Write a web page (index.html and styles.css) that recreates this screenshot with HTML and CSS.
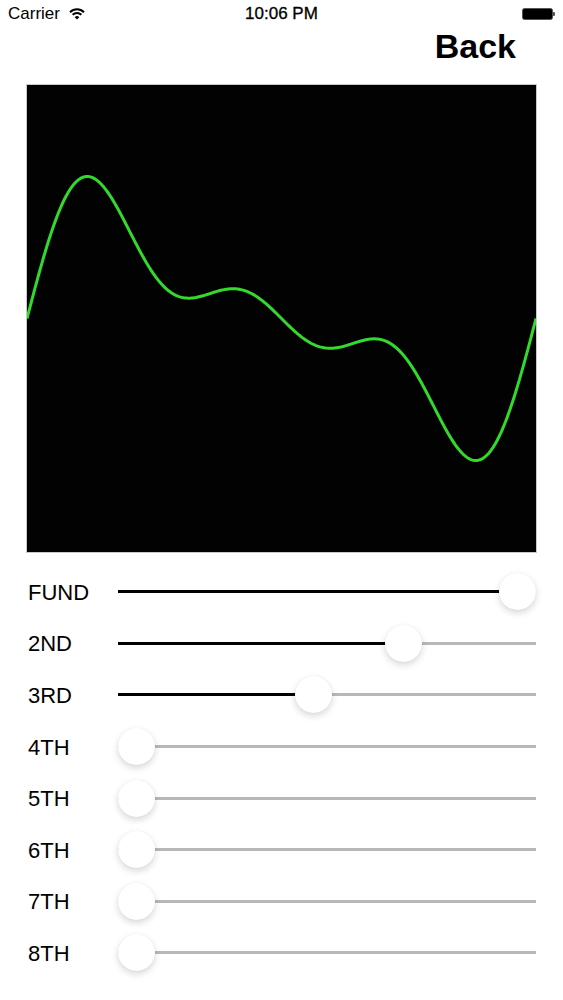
FILE: index.html
```html
<!DOCTYPE html>
<html lang="en">

<head>
    <meta charset="UTF-8">
    <meta name="viewport" content="width=device-width, initial-scale=1.0">
    <title>Harmonics</title>
    <link rel="stylesheet" href="styles.css">
</head>

<body>

    <div class="status-bar">
        <div class="carrier">
            Carrier
            <svg class="wifi" width="16" height="12" viewBox="0 0 16 12">
                <path d="M1 4.2 A10 10 0 0 1 15 4.2" />
                <path d="M3.6 6.8 A6.3 6.3 0 0 1 12.4 6.8" />
                <path d="M8 11.5 L5.7 9.2 A3.2 3.2 0 0 1 10.3 9.2 Z" class="wifi-dot" />
            </svg>
        </div>
        <div class="time">10:06 PM</div>
        <div class="battery"><span class="battery-body"></span><span class="battery-nub"></span></div>
    </div>

    <div class="nav">
        <span class="back">Back</span>
    </div>

    <div class="scope">
        <svg id="wave" width="509" height="467" viewBox="0 0 509 467">
            <polyline id="line" points="" />
        </svg>
    </div>

    <div class="sliders">
        <div class="row">
            <span class="label">FUND</span>
            <div class="slider" style="--v: 1"><span class="fill"></span><span class="thumb"></span></div>
        </div>
        <div class="row">
            <span class="label">2ND</span>
            <div class="slider" style="--v: 0.7"><span class="fill"></span><span class="thumb"></span></div>
        </div>
        <div class="row">
            <span class="label">3RD</span>
            <div class="slider" style="--v: 0.465"><span class="fill"></span><span class="thumb"></span></div>
        </div>
        <div class="row">
            <span class="label">4TH</span>
            <div class="slider" style="--v: 0"><span class="fill"></span><span class="thumb"></span></div>
        </div>
        <div class="row">
            <span class="label">5TH</span>
            <div class="slider" style="--v: 0"><span class="fill"></span><span class="thumb"></span></div>
        </div>
        <div class="row">
            <span class="label">6TH</span>
            <div class="slider" style="--v: 0"><span class="fill"></span><span class="thumb"></span></div>
        </div>
        <div class="row">
            <span class="label">7TH</span>
            <div class="slider" style="--v: 0"><span class="fill"></span><span class="thumb"></span></div>
        </div>
        <div class="row">
            <span class="label">8TH</span>
            <div class="slider" style="--v: 0"><span class="fill"></span><span class="thumb"></span></div>
        </div>
    </div>

    <script>
        const sliders = document.querySelectorAll('.slider')
        const line = document.getElementById('line')
        const w = 509
        const h = 467
        const peak = 142

        // amplitudes come straight from the slider values
        const amps = [...sliders].map(s => parseFloat(s.style.getPropertyValue('--v')))

        const samples = []
        let max = 0
        for (let i = 0; i <= w; i++) {
            const t = i / w * Math.PI * 2
            let y = 0
            amps.forEach((a, n) => { y += a * Math.sin(t * (n + 1)) })
            samples.push(y)
            if (Math.abs(y) > max) max = Math.abs(y)
        }

        line.setAttribute('points', samples.map((y, i) => `${i},${(h / 2 - y / max * peak).toFixed(2)}`).join(' '))
    </script>
</body>

</html>
```

FILE: styles.css
```css
body {
    margin: 0;
    background: white;
    font-family: 'Liberation Sans', Arial, sans-serif;
    color: black;
}

.status-bar {
    height: 28px;
    display: flex;
    align-items: center;
    justify-content: space-between;
    padding: 0 8px 0 8px;
    font-size: 17px;
}

.carrier {
    display: flex;
    align-items: center;
    gap: 9px;
    width: 120px;
}

.wifi {
    fill: none;
    stroke: black;
    stroke-width: 2;
}

.wifi .wifi-dot {
    fill: black;
    stroke: none;
}

.time {
    font-size: 17px;
    -webkit-text-stroke: 0.3px black;
}

.battery {
    width: 120px;
    display: flex;
    justify-content: flex-end;
    align-items: center;
}

.battery-body {
    width: 29px;
    height: 10px;
    background: black;
    border: 1px solid #555;
    border-radius: 2.5px;
}

.battery-nub {
    width: 2px;
    height: 4px;
    background: #555;
    border-radius: 0 1px 1px 0;
}

.nav {
    height: 54px;
    display: flex;
    justify-content: flex-end;
    padding: 1px 47px 0 0;
    box-sizing: border-box;
}

.back {
    font-size: 34px;
    line-height: 34px;
    font-weight: bold;
}

.scope {
    margin: 2px 26px 0 26px;
    border: 1px solid #c9c9c9;
    background: #030203;
    line-height: 0;
}

#wave {
    display: block;
}

#line {
    fill: none;
    stroke: #33d92b;
    stroke-width: 3;
    stroke-linejoin: round;
}

.sliders {
    margin-top: 13px;
}

.row {
    height: 51.6px;
    display: flex;
    align-items: center;
    padding: 0 27px 0 28px;
}

.label {
    width: 90px;
    font-size: 22px;
    padding-top: 2px;
}

.slider {
    flex: 1;
    height: 37px;
    position: relative;
    background: linear-gradient(#b8b8b8, #b8b8b8) no-repeat left center / 100% 3px;
}

.fill {
    position: absolute;
    left: 0;
    top: 17px;
    height: 3px;
    width: calc(18.5px + var(--v) * (100% - 37px));
    background: black;
}

.thumb {
    position: absolute;
    top: 0;
    left: calc(var(--v) * (100% - 37px));
    width: 37px;
    height: 37px;
    border-radius: 50%;
    background: white;
    box-shadow: 0 3px 7px rgba(0, 0, 0, 0.16), 0 0 1px rgba(0, 0, 0, 0.08);
}
```
